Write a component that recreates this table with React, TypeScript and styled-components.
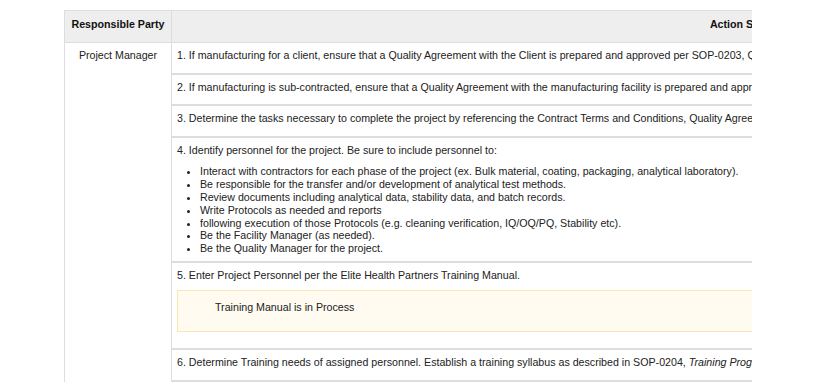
import React from "react";
import styled, { createGlobalStyle } from "styled-components";

const GlobalStyle = createGlobalStyle`
  html, body {
    margin: 0;
    padding: 0;
    background: #ffffff;
    overflow: hidden;
  }
  body {
    font-family: "Liberation Sans", Arial, sans-serif;
    font-size: 8pt;
    color: #222222;
  }
`;

const Viewport = styled.div`
  margin: 10px 0 0 64px;
  width: 688px;
  overflow: hidden;
`;

const Table = styled.div`
  display: grid;
  grid-template-columns: 107px 1141px;
  border-top: 1px solid #dddddd;
  border-left: 1px solid #dddddd;
  font-size: 8pt;
  line-height: 12.8px;
`;

const HeaderCell = styled.div<{ $divider?: boolean }>`
  background: #eeeeee;
  border-bottom: 1px solid #dddddd;
  border-right: ${(p) => (p.$divider ? "1px solid #dddddd" : "none")};
  padding: 7px 5px 11px;
  font-weight: bold;
  color: #111111;
  text-align: center;
  white-space: nowrap;
`;

const PartyCell = styled.div`
  border-right: 1px solid #dddddd;
  padding: 6.5px 5px;
  text-align: center;
  color: #222222;
`;

const StepsCell = styled.div`
  display: flex;
  flex-direction: column;
`;

const Step = styled.div`
  border-bottom: 2px solid #dddddd;
  padding: 6px 5px 5.5px;
`;

const StepText = styled.p<{ $gap?: number }>`
  margin: 0 0 ${(p) => (p.$gap ?? 5.5)}px;
  white-space: nowrap;
`;

const BulletList = styled.ul`
  margin: 0;
  padding-left: 23px;
  list-style: disc;
`;

const Bullet = styled.li`
  white-space: nowrap;
`;

const Notice = styled.div`
  margin: 9px 0 10.5px;
  border: 1px solid #fbe6b3;
  background: #fffbf0;
  padding: 10px 37px 17.2px;
  color: #222222;
`;

const steps = [
  "1. If manufacturing for a client, ensure that a Quality Agreement with the Client is prepared and approved per SOP-0203, Quality Agreements.",
  "2. If manufacturing is sub-contracted, ensure that a Quality Agreement with the manufacturing facility is prepared and approved per SOP-0203, Quality Agreements.",
  "3. Determine the tasks necessary to complete the project by referencing the Contract Terms and Conditions, Quality Agreement, and Project Scope.",
];

const personnelDuties = [
  "Interact with contractors for each phase of the project (ex. Bulk material, coating, packaging, analytical laboratory).",
  "Be responsible for the transfer and/or development of analytical test methods.",
  "Review documents including analytical data, stability data, and batch records.",
  "Write Protocols as needed and reports",
  "following execution of those Protocols (e.g. cleaning verification, IQ/OQ/PQ, Stability etc).",
  "Be the Facility Manager (as needed).",
  "Be the Quality Manager for the project.",
];

export default function App() {
  return (
    <>
      <GlobalStyle />
      <Viewport>
        <Table>
          <HeaderCell $divider>Responsible Party</HeaderCell>
          <HeaderCell>Action Steps</HeaderCell>

          <PartyCell>Project Manager</PartyCell>
          <StepsCell>
            {steps.map((s) => (
              <Step key={s}>
                <StepText>{s}</StepText>
              </Step>
            ))}
            <Step>
              <StepText $gap={8.5}>
                4. Identify personnel for the project. Be sure to include personnel to:
              </StepText>
              <BulletList>
                {personnelDuties.map((d) => (
                  <Bullet key={d}>{d}</Bullet>
                ))}
              </BulletList>
            </Step>
            <Step>
              <StepText $gap={0}>
                5. Enter Project Personnel per the Elite Health Partners Training Manual.
              </StepText>
              <Notice>Training Manual is in Process</Notice>
            </Step>
            <Step>
              <StepText>
                6. Determine Training needs of assigned personnel. Establish a training syllabus as
                described in SOP-0204, <i>Training Program</i>.
              </StepText>
            </Step>
          </StepsCell>
        </Table>
      </Viewport>
    </>
  );
}
